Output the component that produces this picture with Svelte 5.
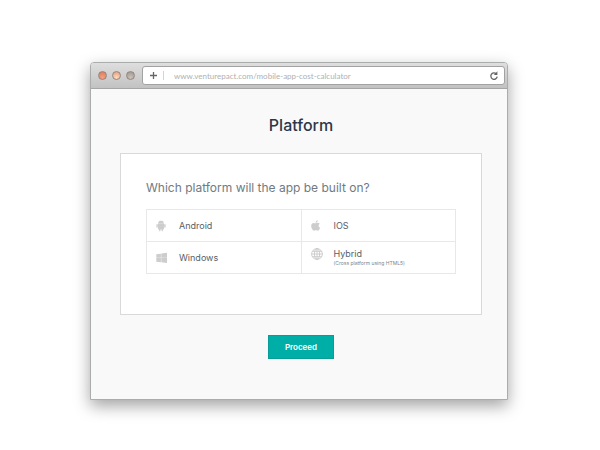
<script lang="ts">
  let address = "www.venturepact.com/mobile-app-cost-calculator";
  let selected = "";
  const platforms = [
    {id: "android", name: "Android", note: ""},
    {id: "ios", name: "IOS", note: ""},
    {id: "windows", name: "Windows", note: ""},
    {id: "hybrid", name: "Hybrid", note: "(Cross platform using HTML5)"},
  ];
</script>

<div class="browser">
  <header class="toolbar">
    <div class="lights">
      <button class="light red" aria-label="Close"></button>
      <button class="light orange" aria-label="Minimize"></button>
      <button class="light grey" aria-label="Zoom"></button>
    </div>
    <div class="addressBar">
      <button class="tool" aria-label="New tab">
        <svg width="9" height="9" viewBox="0 0 9 9"><path d="M4.5 1v7M1 4.5h7" stroke="#666" stroke-width="1.3" /></svg>
      </button>
      <span class="divider"></span>
      <input class="address" aria-label="Address" bind:value={address} />
      <button class="tool" aria-label="Reload">
        <svg width="10" height="10" viewBox="0 0 10 10">
          <path d="M7.2 2.7A3.200 3.200 0 1 0 8.200 5.600" fill="none" stroke="#666" stroke-width="1.3" />
          <path d="M8.400.3v3.600H4.800z" fill="#666" />
        </svg>
      </button>
    </div>
  </header>

  <main class="page">
    <h1>Platform</h1>
    <section class="card">
      <h2>Which platform will the app be built on?</h2>
      <div class="options">
        {#each platforms as platform}
          <button class="option" class:noted={platform.note !== ""} aria-pressed={selected === platform.id} on:click={() => {selected = platform.id}}>
            <svg class="icon" width="12" height="12" viewBox="0 0 12 12">
              {#if platform.id === "android"}
                <path d="M2 3.700C2.200 2.200 2.900 1.300 3.700.8h2.600C7.100 1.300 7.800 2.200 8 3.700zM2 4h6v4.700c0 .5-.3.8-.8.8H6.900v1.200c0 .8-1.300.8-1.300 0V9.500H4.400v1.200c0 .8-1.300.8-1.300 0V9.500h-.3c-.5 0-.8-.3-.8-.8zM.4 4.700c0-.9 1.400-.9 1.400 0v2.400c0 .9-1.400.9-1.400 0zM8.200 4.700c0-.9 1.400-.9 1.400 0v2.400c0 .9-1.400.9-1.400 0z" />
              {:else if platform.id === "ios"}
                <path d="M6.700.2c.1 1.300-.9 2.400-2.100 2.500C4.500 1.500 5.500.4 6.700.2zM4.700 3.300c.5 0 1.200-.5 2.100-.5.8 0 1.500.4 1.900 1-1.700 1-1.400 3.300.4 4-.4 1.300-1.300 2.900-2.300 2.900-.7 0-1-.4-1.900-.4s-1.200.4-1.800.4C1.700 10.700.2 8 .2 6.100c0-2 1.200-3.200 2.500-3.200.8 0 1.400.4 2 .4z" />
              {:else if platform.id === "windows"}
                <path d="M.3 2.300 4.900 1.700v4H.3zM5.300 1.600 11 .8v4.900H5.300zM.3 6.100h4.600v4.200L.3 9.700zM5.300 6.100H11v5l-5.700-.8z" />
              {:else}
                <g fill="none" stroke="#c4c4c4" stroke-width=".8">
                  <circle cx="6" cy="6" r="5.400" />
                  <ellipse cx="6" cy="6" rx="2.600" ry="5.400" />
                  <path d="M6 .6v10.800M.6 6h10.800M1.400 3.300h9.200M1.400 8.700h9.200" />
                </g>
              {/if}
            </svg>
            <span class="label">
              <span class="name">{platform.name}</span>
              {#if platform.note !== ""}
                <span class="note">{platform.note}</span>
              {/if}
            </span>
          </button>
        {/each}
      </div>
    </section>
    <button class="proceed">Proceed</button>
  </main>
</div>

<style>
  :global(body) {
    background-color: #fff;
    font-family: Inter, "Open Sans", sans-serif;
  }
  button {
    margin: 0;
    padding: 0;
    border: none;
    background: none;
    font-family: inherit;
    cursor: pointer;
  }
  svg {
    display: block;
  }
  .browser {
    margin: 62px 92px 50px 90px;
    border: 1px solid #a9adab;
    border-radius: 4px 4px 0 0;
    background-color: #f9f9f9;
    box-shadow: 0 6px 16px rgba(0, 0, 0, 0.36);
  }
  .toolbar {
    display: flex;
    align-items: center;
    gap: 7px;
    padding: 3px 2px 3px 7px;
    border-bottom: 1px solid #a6a6a6;
    border-radius: 3px 3px 0 0;
    background: linear-gradient(#dedede, #c2c2c2);
  }
  .lights {
    display: flex;
    gap: 5px;
  }
  .light {
    width: 9px;
    height: 9px;
    border: 1px solid #98857c;
    border-radius: 50%;
  }
  .red {
    background: radial-gradient(circle at 50% 80%, #f2a184, #e07650);
  }
  .orange {
    background: radial-gradient(circle at 50% 80%, #fbdcc4, #e39873);
  }
  .grey {
    background: radial-gradient(circle at 50% 80%, #c9c3bc, #9b948e);
  }
  .addressBar {
    flex: 1;
    display: flex;
    align-items: center;
    min-width: 0;
    height: 17px;
    padding: 0 5px 0 6px;
    border: 1px solid #a2a2a2;
    border-radius: 3px;
    background-color: #fff;
  }
  .divider {
    width: 1px;
    height: 9px;
    margin: 0 10px 0 5px;
    background-color: #d4d4d4;
  }
  .address {
    flex: 1;
    min-width: 0;
    padding: 0;
    border: none;
    outline: none;
    background: none;
    font-family: Lato, sans-serif;
    font-size: 8px;
    line-height: 12px;
    color: #b0b0b0;
  }
  .page {
    display: flex;
    flex-direction: column;
    align-items: center;
    padding: 26px 25px 40px 29px;
  }
  h1 {
    margin: 0;
    font-size: 16px;
    font-weight: 500;
    line-height: 20px;
    color: #2b364a;
  }
  .card {
    box-sizing: border-box;
    width: 100%;
    margin: 18px 0 20px;
    padding: 25px 25px 40px;
    border: 1px solid #d8dada;
    background-color: #fff;
  }
  h2 {
    margin: 0 0 12px;
    font-size: 12px;
    font-weight: 400;
    line-height: 18px;
    color: #6f7a82;
  }
  .options {
    display: grid;
    grid-template-columns: 1fr 1fr;
    border-top: 1px solid #e8e8e8;
    border-left: 1px solid #e8e8e8;
  }
  .option {
    display: flex;
    align-items: center;
    gap: 11px;
    height: 32px;
    padding: 0 9px;
    border-right: 1px solid #e8e8e8;
    border-bottom: 1px solid #e8e8e8;
    text-align: left;
  }
  .icon {
    flex: none;
    fill: #cdcdcd;
  }
  .noted {
    align-items: flex-start;
    padding-top: 6px;
  }
  .label {
    display: flex;
    flex-direction: column;
  }
  .name {
    font-size: 9px;
    line-height: 12px;
    color: #56616a;
  }
  .note {
    font-size: 5px;
    line-height: 6px;
    color: #7c858c;
  }
  .proceed {
    height: 24px;
    padding: 0 16px;
    border: 1px solid #079e98;
    background-color: #00aea8;
    font-size: 8px;
    font-weight: 600;
    line-height: 12px;
    color: #fff;
  }
</style>
